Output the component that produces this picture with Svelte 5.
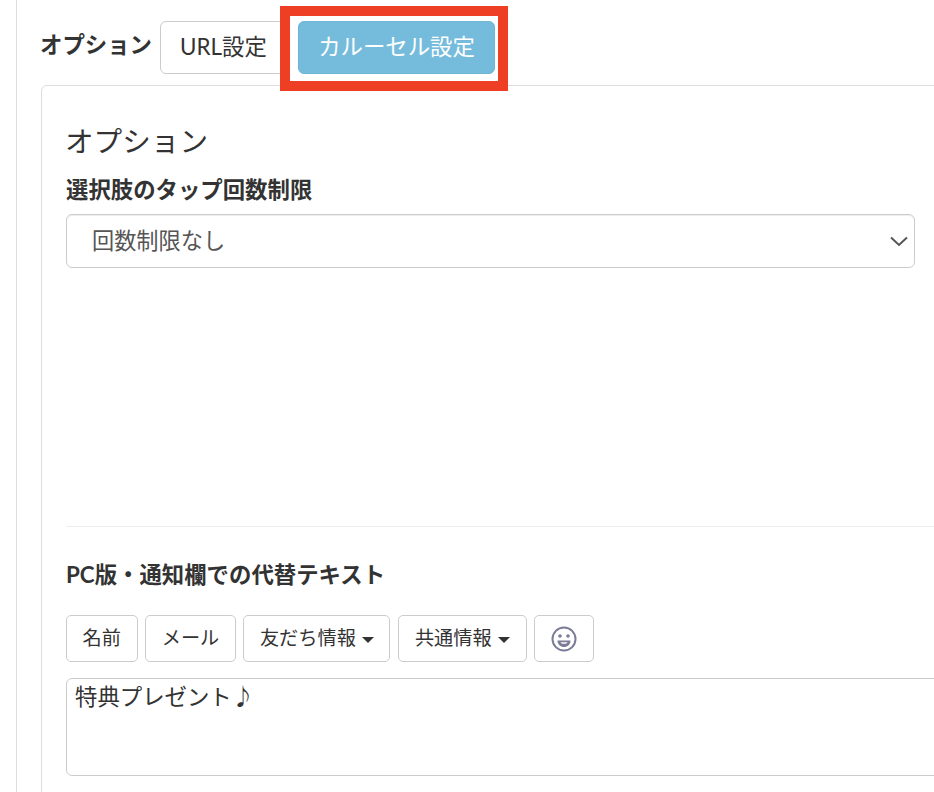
<script>
  const tools = [
    { label: '名前', w: 71.6 },
    { label: 'メール', w: 91 },
    { label: '友だち情報', w: 147, caret: true },
    { label: '共通情報', w: 129, caret: true }
  ];
</script>

<div class="page">
  <div class="tabs">
    <span class="tabs-label">オプション</span>
    <button class="tab url">URL設定</button>
    <div class="highlight">
      <button class="tab active">カルーセル設定</button>
    </div>
  </div>

  <section class="card">
    <h2>オプション</h2>
    <label class="field-label" for="limit">選択肢のタップ回数制限</label>
    <div class="select-wrap">
      <select id="limit">
        <option>回数制限なし</option>
      </select>
      <svg class="chevron" viewBox="0 0 18 11" width="18" height="11" aria-hidden="true">
        <path d="M1 1.5 L9 9 L17 1.5" fill="none" stroke="#555" stroke-width="2" />
      </svg>
    </div>

    <hr />

    <h3>PC版・通知欄での代替テキスト</h3>
    <div class="tools">
      {#each tools as t}
        <button class="tool" style="width:{t.w}px">
          {t.label}{#if t.caret}<span class="caret"></span>{/if}
        </button>
      {/each}
      <button class="tool emoji" aria-label="絵文字">
        <svg viewBox="0 0 28 28" width="28" height="28" aria-hidden="true">
          <circle cx="14" cy="14" r="11.5" fill="none" stroke="#7b7c97" stroke-width="2" />
          <circle cx="10" cy="11" r="1.8" fill="#7b7c97" />
          <circle cx="18" cy="11" r="1.8" fill="#7b7c97" />
          <path d="M7.5 15.5 H20.5 C20.5 19.5 17.5 22 14 22 C10.5 22 7.5 19.5 7.5 15.5 Z" fill="#7b7c97" />
          <path d="M10.5 17.3 H17.5 C17 18.3 15.8 18.8 14 18.8 C12.2 18.8 11 18.3 10.5 17.3 Z" fill="#fff" />
        </svg>
      </button>
    </div>
    <textarea readonly>特典プレゼント♪</textarea>
  </section>
</div>

<style>
  :global(body) {
    margin: 0;
    overflow: hidden;
    background: #fff;
  }

  .page {
    box-sizing: border-box;
    width: 1100px;
    height: 792px;
    overflow: hidden;
    margin-left: 16px;
    padding: 21px 0 0 24px;
    border-left: 1px solid #ddd;
    font-family: Lato, "Noto Sans CJK JP", sans-serif;
    color: #333;
  }

  .tabs {
    display: flex;
    align-items: center;
    height: 53px;
  }

  .tabs-label {
    width: 120px;
    margin: -10px 0 0 -1px;
    font-size: 22.4px;
    font-weight: 700;
    white-space: nowrap;
  }

  .tab {
    box-sizing: border-box;
    height: 53px;
    font: inherit;
    font-size: 22.4px;
    border-radius: 6px;
    padding: 0 0 5px;
  }

  .url {
    width: 125px;
    padding-left: 2px;
    background: #fff;
    border: 1px solid #ccc;
    color: #333;
  }

  .highlight {
    position: relative;
    z-index: 1;
    box-sizing: border-box;
    width: 228px;
    height: 85px;
    margin: 1px 0 0 -5px;
    padding: 5px 0 0 8px;
    background: #fff;
    border: 10px solid #ee3f24;
    flex: none;
  }

  .active {
    width: 197px;
    background: #75bcdc;
    border: 1px solid #6fb6d6;
    color: #fff;
  }

  .card {
    box-sizing: border-box;
    width: 1040px;
    height: 760px;
    margin-top: 11px;
    padding: 34px 24px 0;
    background: #fff;
    border: 1px solid #ddd;
    border-radius: 6px;
  }

  h2 {
    margin: 0 0 0 -1px;
    font-size: 28.6px;
    font-weight: 400;
    line-height: 42px;
  }

  .field-label {
    display: block;
    margin-top: 12px;
    font-size: 22.4px;
    font-weight: 700;
    line-height: 32px;
  }

  .select-wrap {
    position: relative;
    width: 849px;
    margin-top: 8px;
  }

  select {
    display: block;
    box-sizing: border-box;
    width: 100%;
    height: 54px;
    padding: 0 25px 2px;
    appearance: none;
    background: #fff;
    border: 1px solid #ccc;
    border-radius: 6px;
    box-shadow: inset 0 1px 1px rgba(0, 0, 0, 0.075);
    font: inherit;
    font-size: 22.2px;
    color: #555;
  }

  .chevron {
    position: absolute;
    top: 22px;
    right: 7px;
  }

  hr {
    height: 0;
    margin: 258px 0 0;
    border: 0;
    border-top: 1px solid #eee;
  }

  h3 {
    margin: 32px 0 0;
    font-size: 22.4px;
    font-weight: 700;
    line-height: 32px;
  }

  .tools {
    display: flex;
    gap: 7.4px;
    margin-top: 24px;
  }

  .tool {
    box-sizing: border-box;
    height: 47px;
    padding: 0 0 4px;
    background: #fff;
    border: 1px solid #ccc;
    border-radius: 5px;
    font: inherit;
    font-size: 19.2px;
    color: #333;
    white-space: nowrap;
  }

  .caret {
    display: inline-block;
    margin-left: 6px;
    vertical-align: middle;
    border-top: 6px solid #333;
    border-left: 6px solid transparent;
    border-right: 6px solid transparent;
  }

  .emoji {
    width: 60px;
    padding: 0;
    display: flex;
    align-items: center;
    justify-content: center;
  }

  textarea {
    display: block;
    box-sizing: border-box;
    width: 1000px;
    height: 98px;
    margin-top: 16px;
    padding: 2px 8px;
    background: #fff;
    border: 1px solid #ccc;
    border-radius: 6px;
    font: inherit;
    font-size: 22.4px;
    line-height: 32px;
    color: #333;
    resize: none;
    outline: none;
  }
</style>
